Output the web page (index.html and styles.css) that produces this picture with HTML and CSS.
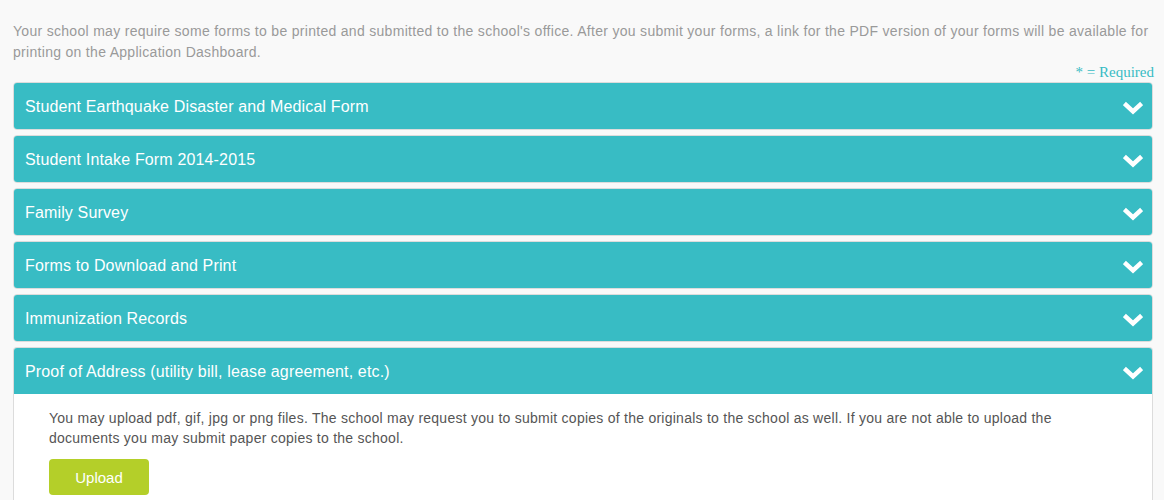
FILE: index.html
```html
<!DOCTYPE html>
<html>
<head>
<meta charset="utf-8">
<link rel="stylesheet" href="styles.css">
</head>
<body>
<div class="page">
  <p class="intro">Your school may require some forms to be printed and submitted to the school's office. After you submit your forms, a link for the PDF version of your forms will be available for printing on the Application Dashboard.</p>
  <div class="required">* = Required</div>
  <div class="panels">
    <div class="panel">
      <div class="panel-heading"><span>Student Earthquake Disaster and Medical Form</span><svg class="chev" viewBox="0 0 20 14"><polyline points="3,4 10,10.5 17,4"/></svg></div>
    </div>
    <div class="panel">
      <div class="panel-heading"><span>Student Intake Form 2014-2015</span><svg class="chev" viewBox="0 0 20 14"><polyline points="3,4 10,10.5 17,4"/></svg></div>
    </div>
    <div class="panel">
      <div class="panel-heading"><span>Family Survey</span><svg class="chev" viewBox="0 0 20 14"><polyline points="3,4 10,10.5 17,4"/></svg></div>
    </div>
    <div class="panel">
      <div class="panel-heading"><span>Forms to Download and Print</span><svg class="chev" viewBox="0 0 20 14"><polyline points="3,4 10,10.5 17,4"/></svg></div>
    </div>
    <div class="panel">
      <div class="panel-heading"><span>Immunization Records</span><svg class="chev" viewBox="0 0 20 14"><polyline points="3,4 10,10.5 17,4"/></svg></div>
    </div>
    <div class="panel open">
      <div class="panel-heading"><span>Proof of Address (utility bill, lease agreement, etc.)</span><svg class="chev" viewBox="0 0 20 14"><polyline points="3,4 10,10.5 17,4"/></svg></div>
      <div class="panel-body">
        <p>You may upload pdf, gif, jpg or png files. The school may request you to submit copies of the originals to the school as well. If you are not able to upload the documents you may submit paper copies to the school.</p>
        <button class="upload">Upload</button>
      </div>
    </div>
  </div>
</div>
</body>
</html>
```
FILE: styles.css
```css
html, body {
  margin: 0;
  padding: 0;
  background: #f9f9f9;
}
.page {
  padding: 0 11px 0 13px;
  font-family: "Liberation Sans", Arial, sans-serif;
}
.intro {
  margin: 0;
  padding-top: 21px;
  font-size: 14px;
  line-height: 21px;
  letter-spacing: 0.3px;
  color: #9a9a9a;
}
.required {
  text-align: right;
  font-family: "Liberation Serif", "Times New Roman", serif;
  font-size: 15px;
  line-height: 20px;
  color: #38bcc4;
  margin-right: -1px;
  margin-top: -1px;
}
.panels {
  display: flex;
  flex-direction: column;
  gap: 5px;
}
.panel {
  border: 1px solid #dcdcdc;
  border-radius: 4px;
  background: #fff;
  overflow: hidden;
}
.panel-heading {
  background: #38bcc4;
  color: #fff;
  font-size: 16px;
  line-height: 20px;
  letter-spacing: 0.15px;
  padding: 14px 12px 12px 11px;
  display: flex;
  align-items: center;
  justify-content: space-between;
}
.chev {
  width: 20px;
  height: 14px;
  margin-right: -3px;
  margin-top: 2px;
}
.chev polyline {
  fill: none;
  stroke: #fff;
  stroke-width: 4.5;
  stroke-linecap: square;
  stroke-linejoin: miter;
}
.panel.open {
  border-bottom: none;
  border-radius: 4px 4px 0 0;
}
.panel-body {
  padding: 14px 35px 20px 35px;
}
.panel-body p {
  margin: 0;
  font-size: 14px;
  line-height: 20px;
  letter-spacing: 0.25px;
  color: #555;
}
.upload {
  margin-top: 11px;
  width: 100px;
  height: 36px;
  border: none;
  border-radius: 4px;
  background: #b4cf29;
  color: #fff;
  font-family: "Liberation Sans", Arial, sans-serif;
  font-size: 15px;
  padding: 0;
}
```
